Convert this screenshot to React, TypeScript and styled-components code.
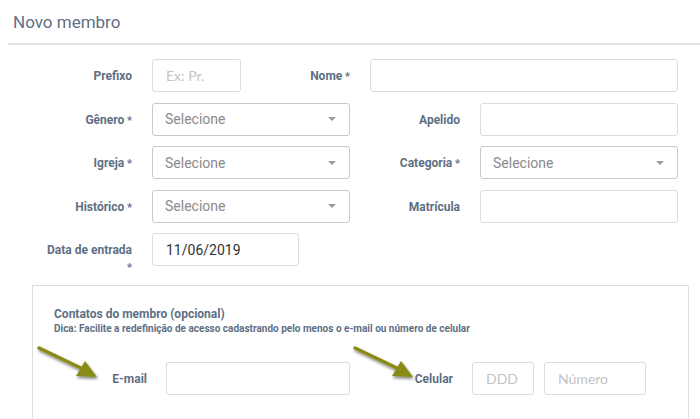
import React from 'react';
import styled, {createGlobalStyle} from "styled-components";

const GlobalStyle = createGlobalStyle`
    body {
        margin: 0;
        background: #fff;
        font-family: Roboto, "Liberation Sans", sans-serif;
    }
`

const labelColor = '#5e6f85'

const Arrow = () => (
    <svg width="72" height="40" viewBox="0 0 72 40">
        <defs>
            <filter id="arrowShadow" x="-20%" y="-20%" width="140%" height="160%">
                <feDropShadow dx="1" dy="2" stdDeviation="1.5" floodColor="#000" floodOpacity="0.5"/>
            </filter>
        </defs>
        <g filter="url(#arrowShadow)">
            <line x1="4" y1="4" x2="50" y2="26" stroke="#8a8a14" strokeWidth="3.5" strokeLinecap="round"/>
            <polygon points="62,33 41,32 50,17" fill="#8a8a14"/>
        </g>
    </svg>
)

const Caret = () => (
    <svg width="8" height="4" viewBox="0 0 8 4">
        <polygon points="0,0 8,0 4,4" fill="#999"/>
    </svg>
)

export default function App() {
    return (
        <Page>
            <GlobalStyle/>
            <Header>
                <Title>Novo membro</Title>
            </Header>

            <Form>
                <Row>
                    <Label width={100}>Prefixo</Label>
                    <Input width={89} placeholder="Ex: Pr."/>
                    <Label width={89} required>Nome</Label>
                    <Input width={308}/>
                </Row>
                <Row>
                    <Label width={100} required>Gênero</Label>
                    <Select width={198}><span>Selecione</span><Caret/></Select>
                    <Label width={90}>Apelido</Label>
                    <Input width={198}/>
                </Row>
                <Row>
                    <Label width={100} required>Igreja</Label>
                    <Select width={198}><span>Selecione</span><Caret/></Select>
                    <Label width={90} required>Categoria</Label>
                    <Select width={198}><span>Selecione</span><Caret/></Select>
                </Row>
                <Row>
                    <Label width={100} required>Histórico</Label>
                    <Select width={198}><span>Selecione</span><Caret/></Select>
                    <Label width={90}>Matrícula</Label>
                    <Input width={198}/>
                </Row>
                <Row>
                    <Label width={100} required narrow>Data de entrada</Label>
                    <Input width={147} value="11/06/2019" readOnly dark/>
                </Row>
            </Form>

            <ContactBox>
                <ArrowSpot left={2} top={58}><Arrow/></ArrowSpot>
                <ArrowSpot left={318} top={58}><Arrow/></ArrowSpot>

                <ContactTitle>Contatos do membro (opcional)</ContactTitle>
                <Hint>Dica: Facilite a redefinição de acesso cadastrando pelo menos o e-mail ou número de celular</Hint>

                <ContactRow>
                    <Label width={93}>E-mail</Label>
                    <Input width={184}/>
                    <Label width={84}>Celular</Label>
                    <PhoneGroup>
                        <Input width={62} placeholder="DDD"/>
                        <Input width={102} placeholder="Número"/>
                    </PhoneGroup>
                </ContactRow>
            </ContactBox>
        </Page>
    );
}

const Page = styled.div`
    width: 700px;
    height: 419px;
    overflow: hidden;
    padding-left: 8px;
    box-sizing: border-box;
`

const Header = styled.div`
    border-bottom: 2px solid #e1e6ec;
    padding: 12px 0 11px 5px;
`

const Title = styled.h1`
    margin: 0;
    font-family: Roboto, sans-serif;
    font-weight: 400;
    font-size: 17px;
    line-height: 20px;
    color: #5f7082;
`

const Form = styled.div`
    display: flex;
    flex-direction: column;
    gap: 10.5px;
    padding: 14px 0 0 24px;
`

const Row = styled.div`
    display: flex;
    align-items: flex-start;
    gap: 20px;
`

const Label = styled.label<{ width: number, required?: boolean, narrow?: boolean }>`
    width: ${p => p.width}px;
    flex: none;
    box-sizing: border-box;
    padding: 9px 0 0 ${p => p.narrow ? 14 : 0}px;
    text-align: right;
    font-family: Roboto, sans-serif;
    font-weight: 700;
    font-size: 12px;
    line-height: 16px;
    color: ${labelColor};

    &::after {
        content: ${p => p.required ? "' *'" : "''"};
        font-size: 11px;
    }
`

const Input = styled.input<{ width: number, dark?: boolean }>`
    width: ${p => p.width}px;
    height: 33px;
    flex: none;
    box-sizing: border-box;
    margin: 0;
    padding: 0 13px;
    border: 1px solid #dcdcdc;
    border-radius: 3px;
    background: #fff;
    font-family: Roboto, sans-serif;
    font-size: 14px;
    color: ${p => p.dark ? '#333' : '#555'};
    outline: none;

    &::placeholder {
        font-family: Lato, Roboto, sans-serif;
        color: #c4c4c4;
    }
`

const Select = styled.div<{ width: number }>`
    width: ${p => p.width}px;
    height: 33px;
    flex: none;
    box-sizing: border-box;
    display: flex;
    align-items: center;
    justify-content: space-between;
    padding: 0 13px 0 12px;
    border: 1px solid #c9c9c9;
    border-radius: 3px;
    font-family: Roboto, sans-serif;
    font-size: 14px;
    color: #8a8a8a;
`

const ContactBox = styled.div`
    position: relative;
    margin: 9px 11px 0 24px;
    border: 1px solid #dedede;
    border-bottom: none;
    height: 200px;
    padding: 20px 0 0 21px;
`

const ArrowSpot = styled.div<{ left: number, top: number }>`
    position: absolute;
    left: ${p => p.left}px;
    top: ${p => p.top}px;
    line-height: 0;
`

const ContactTitle = styled.div`
    font-family: Roboto, sans-serif;
    font-weight: 700;
    font-size: 12px;
    line-height: 16px;
    color: ${labelColor};
`

const Hint = styled.div`
    font-family: Roboto, sans-serif;
    font-weight: 700;
    font-size: 10px;
    line-height: 14px;
    color: ${labelColor};
`

const ContactRow = styled.div`
    display: flex;
    align-items: flex-start;
    gap: 19px;
    margin-top: 26px;
`

const PhoneGroup = styled.div`
    display: flex;
    gap: 10px;
`
